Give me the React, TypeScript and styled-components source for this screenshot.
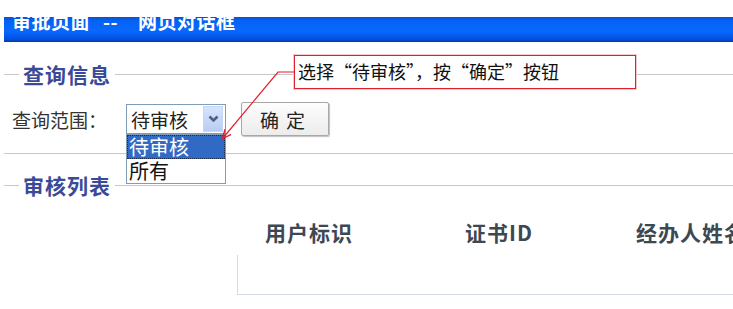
import React from "react"
import styled, { createGlobalStyle } from "styled-components"

const GlobalStyle = createGlobalStyle`
  html, body {
    margin: 0;
    padding: 0;
    background: #fff;
  }
  body {
    font-family: "Noto Sans CJK SC", "Liberation Sans", sans-serif;
    color: #333;
  }
`

const Page = styled.div`
  position: relative;
  width: 733px;
  height: 309px;
  padding: 17px 0 0 4px;
  box-sizing: border-box;
  overflow: hidden;
`

const TitleBar = styled.div`
  height: 25px;
  overflow: hidden;
  background: linear-gradient(#0a4fd0 0%, #0462f4 15%, #0a68ff 55%, #0052e0 88%, #0a3a9a 100%);
`

const TitleText = styled.div`
  display: flex;
  margin: -7px 0 0 8px;
  font-size: 19px;
  letter-spacing: 0.5px;
  line-height: 22px;
  font-weight: bold;
  color: #fff;
  white-space: nowrap;
`

const TitlePart = styled.span<{ $gap: number }>`
  margin-right: ${(p) => p.$gap}px;
`

const Legend = styled.div<{ $top: number }>`
  display: flex;
  align-items: center;
  margin-top: ${(p) => p.$top}px;
  height: 22px;
`

const Rule = styled.div<{ $w?: number }>`
  height: 1px;
  background: #c8c8c8;
  ${(p) => (p.$w ? `width: ${p.$w}px;` : "flex: 1;")}
`

const LegendText = styled.span`
  padding: 0 4px;
  font-size: 21px;
  letter-spacing: 1px;
  line-height: 22px;
  font-weight: bold;
  color: #3a4a98;
`

const QueryRow = styled.div`
  display: flex;
  align-items: center;
  height: 34px;
  margin-top: 17px;
  padding-left: 8px;
`

const Label = styled.span`
  width: 114px;
  font-size: 19px;
  color: #333;
`

const SelectWrap = styled.div`
  position: relative;
  width: 100px;
  height: 30px;
  box-sizing: border-box;
  border: 1px solid #7f9db9;
  display: flex;
  align-items: center;
  justify-content: space-between;
  padding: 0 2px 0 4px;
  background: #fff;
`

const SelectValue = styled.span`
  font-size: 19px;
  color: #222;
`

const ArrowBox = styled.span`
  width: 20px;
  height: 26px;
  display: flex;
  align-items: center;
  justify-content: center;
  background: linear-gradient(#d8e4fb, #b9ccf3);
  border: 1px solid #c6d6f6;
  box-sizing: border-box;
`

const DropList = styled.div`
  position: absolute;
  left: -1px;
  top: 29px;
  width: 100px;
  box-sizing: border-box;
  border: 1px solid #7f9db9;
  background: #fff;
  z-index: 2;
`

const Option = styled.div<{ $active?: boolean }>`
  height: 24px;
  line-height: 22px;
  font-size: 20px;
  padding-left: 1px;
  box-sizing: border-box;
  color: ${(p) => (p.$active ? "#fff" : "#111")};
  background: ${(p) => (p.$active ? "#316ac5" : "#fff")};
  border: ${(p) => (p.$active ? "1px dotted #1a2a50" : "1px solid transparent")};
`

const Button = styled.button`
  margin-left: 15px;
  width: 88px;
  height: 34px;
  font-family: inherit;
  font-size: 19px;
  letter-spacing: 7px;
  padding-left: 8px;
  color: #222;
  border: 1px solid #a8a8a8;
  border-radius: 2px;
  background: linear-gradient(#fdfdfd, #ececec);
  box-shadow: 1px 1px 1px #c0c0c0;
`

const Separator = styled.div`
  height: 1px;
  margin-top: 17px;
  background: #c8c8c8;
`

const TableHead = styled.div`
  display: grid;
  grid-template-columns: 200px 171px 200px;
  margin: 21px 0 0 261px;
  font-size: 21px;
  letter-spacing: 1px;
  font-weight: bold;
  color: #3d4852;
  white-space: nowrap;
`

const TableBody = styled.div`
  margin: 8px 0 0 233px;
  height: 39px;
  border-left: 1px solid #d4dbe3;
  border-bottom: 1px solid #d4dbe3;
`

const Callout = styled.div`
  position: absolute;
  left: 294px;
  top: 55px;
  width: 342px;
  height: 34px;
  box-sizing: border-box;
  border: 1px solid #e0202c;
  box-shadow: 0 0 0 1px #f8c8cc;
  background: #fff;
  padding-left: 3px;
  font-size: 18px;
  line-height: 30px;
  color: #111;
  white-space: nowrap;
  z-index: 3;
`

const Leader = styled.svg`
  position: absolute;
  left: 0;
  top: 0;
  z-index: 4;
  pointer-events: none;
`

const Chevron = () => (
  <svg width="11" height="8" viewBox="0 0 11 8">
    <path d="M1.5 1.5 L5.5 5.5 L9.5 1.5" fill="none" stroke="#4d6185" strokeWidth="2.6" />
  </svg>
)

export default function App() {
  return (
    <>
      <GlobalStyle />
      <Page>
        <TitleBar>
          <TitleText>
            <TitlePart $gap={13}>审批页面</TitlePart>
            <TitlePart $gap={20}>--</TitlePart>
            <span>网页对话框</span>
          </TitleText>
        </TitleBar>
        <Legend $top={21}>
          <Rule $w={15} />
          <LegendText>查询信息</LegendText>
          <Rule />
        </Legend>
        <QueryRow>
          <Label>查询范围：</Label>
          <SelectWrap>
            <SelectValue>待审核</SelectValue>
            <ArrowBox>
              <Chevron />
            </ArrowBox>
            <DropList>
              <Option $active>待审核</Option>
              <Option>所有</Option>
            </DropList>
          </SelectWrap>
          <Button>确定</Button>
        </QueryRow>
        <Separator />
        <Legend $top={20}>
          <Rule $w={15} />
          <LegendText>审核列表</LegendText>
          <Rule />
        </Legend>
        <TableHead>
          <span>用户标识</span>
          <span>证书ID</span>
          <span>经办人姓名</span>
        </TableHead>
        <TableBody />
        <Callout>选择“待审核”，按“确定”按钮</Callout>
        <Leader width="733" height="309">
          <defs>
            <marker id="tip" markerWidth="10" markerHeight="10" refX="8" refY="5" orient="auto" markerUnits="userSpaceOnUse">
              <path d="M0 1 L9 5 L0 9" fill="none" stroke="#e0202c" strokeWidth="1.4" />
            </marker>
          </defs>
          <polyline points="294,72 278,72 223,138" fill="none" stroke="#e0202c" strokeWidth="1.2" markerEnd="url(#tip)" />
        </Leader>
      </Page>
    </>
  )
}
